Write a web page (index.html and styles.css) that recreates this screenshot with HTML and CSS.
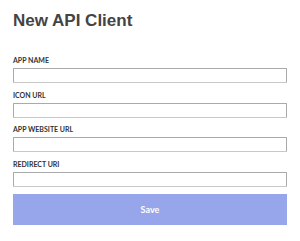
FILE: index.html
```html
<!DOCTYPE html>
<html lang="en">
<head>
    <meta charset="UTF-8">
    <meta name="viewport" content="width=device-width, initial-scale=1.0">
    <title>New API Client</title>
    <link rel="stylesheet" href="styles.css">
</head>
<body>
    <div class="container">
        <h1>New API Client</h1>

        <form class="client-form">
            <div class="field">
                <label for="appName">App Name</label>
                <input type="text" id="appName">
            </div>
            <div class="field">
                <label for="iconUrl">Icon URL</label>
                <input type="text" id="iconUrl">
            </div>
            <div class="field">
                <label for="websiteUrl">App Website URL</label>
                <input type="text" id="websiteUrl">
            </div>
            <div class="field">
                <label for="redirectUri">Redirect URI</label>
                <input type="text" id="redirectUri">
            </div>
            <button type="button" class="btn-save">Save</button>
        </form>
    </div>
</body>
</html>
```

FILE: styles.css
```css
* {
    margin: 0;
    padding: 0;
    box-sizing: border-box;
}

body {
    font-family: Lato, 'Open Sans', sans-serif;
    background: #fff;
}

.container {
    padding: 11px 13px;
}

h1 {
    font-family: 'Liberation Sans', Arial, sans-serif;
    color: #444;
    font-size: 17px;
    font-weight: 700;
    line-height: 20px;
    margin-bottom: 25px;
}

.field {
    margin-bottom: 7.5px;
}

label {
    display: block;
    color: #333;
    font-size: 7px;
    font-weight: 700;
    text-transform: uppercase;
    line-height: 9px;
    margin-bottom: 3px;
}

input[type="text"] {
    display: block;
    width: 100%;
    height: 15px;
    border: 1px solid #aaa;
    border-bottom-color: #c8c8c8;
    border-radius: 1px;
    background: #fff;
}

.btn-save {
    display: block;
    width: 100%;
    height: 31px;
    margin-top: 3px;
    border: none;
    background: #97a6eb;
    color: #fff;
    font-family: Lato, sans-serif;
    font-size: 9px;
    font-weight: 700;
}
```
